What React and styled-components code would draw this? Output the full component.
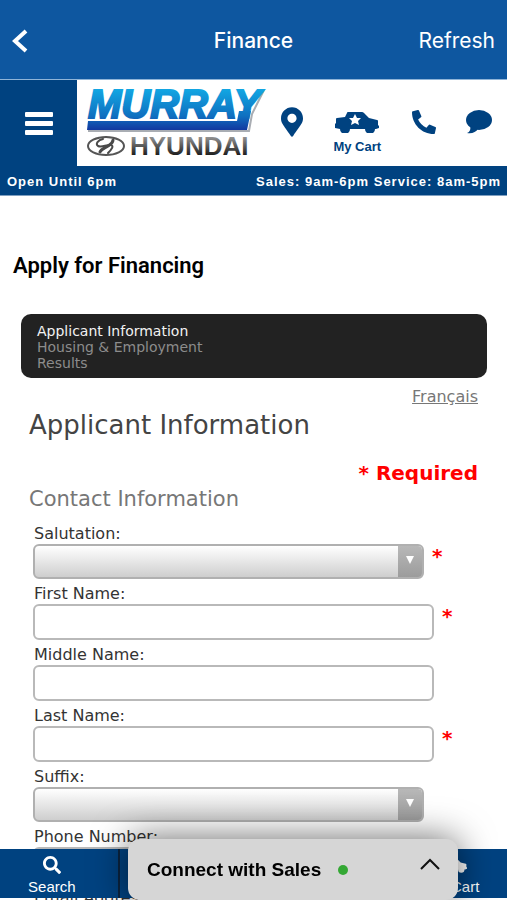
import React from 'react';
import styled, { createGlobalStyle } from 'styled-components';
import { FaMapMarkerAlt, FaPhoneAlt, FaSearch } from 'react-icons/fa';

const GlobalStyle = createGlobalStyle`
  * {
    box-sizing: border-box;
  }

  body {
    margin: 0;
    background: #ffffff;
    font-family: 'DejaVu Sans', Verdana, sans-serif;
  }

  button {
    padding: 0;
    border: 0;
    background: none;
    color: inherit;
    cursor: pointer;
  }
`;

const Screen = styled.div`
  height: 100vh;
  display: flex;
  flex-direction: column;
  overflow: hidden;
`;

const TopBar = styled.header`
  flex: none;
  height: 80px;
  padding: 2px 12px 0;
  display: grid;
  grid-template-columns: 1fr auto 1fr;
  align-items: center;
  background: #0e57a0;
  border-bottom: 1px solid #8fb4d8;
  color: #ffffff;
  font-family: Inter, sans-serif;
  font-size: 21px;

  h1 {
    margin: 0;
    font-size: 21px;
    font-weight: 500;
  }
`;

const BackButton = styled.button`
  justify-self: start;
  display: flex;
`;

const RefreshButton = styled.button`
  justify-self: end;
  font: inherit;
`;

const SiteHeader = styled.div`
  flex: none;
  height: 86px;
  display: flex;
  background: #ffffff;
  color: #004280;
`;

const MenuButton = styled.button`
  width: 77px;
  display: flex;
  align-items: center;
  justify-content: center;
  background: #004280;
`;

const Logo = styled.a`
  flex: none;
  margin-left: 8px;
  display: flex;
`;

const Shortcuts = styled.nav`
  flex: 1;
  padding: 0 15px 0 14px;
  display: flex;
  justify-content: space-between;
`;

const Shortcut = styled.a`
  height: 75px;
  padding-top: 26px;
  display: flex;
  flex-direction: column;
  align-items: center;
  justify-content: space-between;
  color: inherit;
  font: bold 13px/16px 'Liberation Sans', Arial, sans-serif;
  text-decoration: none;

  .icon {
    height: 32px;
    display: flex;
    align-items: center;
  }

  .pin {
    width: 22px;
    height: 30px;
  }
`;

const HoursBar = styled.div`
  flex: none;
  height: 30px;
  padding: 3px 6px 0 7px;
  display: flex;
  align-items: center;
  justify-content: space-between;
  background: #004280;
  border-bottom: 1px solid #7f9fc0;
  color: #ffffff;
  font: bold 13px/16px 'Liberation Sans', Arial, sans-serif;
  letter-spacing: 1px;
`;

const Content = styled.main`
  flex: 1;
  min-height: 0;
  overflow-y: auto;
  scrollbar-width: none;
`;

const PageTitle = styled.h2`
  margin: 56px 13px 34px;
  color: #000000;
  font: 600 22px/28px Roboto, sans-serif;
`;

const Steps = styled.ol`
  margin: 0 20px 0 21px;
  padding: 9px 16px 7px;
  list-style: none;
  background: #222222;
  border-radius: 10px;
  font-size: 14px;
  line-height: 16px;
`;

const Step = styled.li`
  color: ${({ $active }) => ($active ? '#f2f2f2' : '#8c8c8c')};
`;

const Form = styled.form`
  padding: 9px 29px 0;
  display: flex;
  flex-direction: column;
`;

const LanguageLink = styled.a`
  align-self: flex-end;
  color: #777777;
  font-size: 16px;
  line-height: 20px;
`;

const FormTitle = styled.h3`
  margin: 2px 0 20px;
  color: #444444;
  font-size: 26px;
  font-weight: 400;
  line-height: 32px;
`;

const RequiredNote = styled.p`
  margin: 0;
  color: #ff0000;
  font-size: 20px;
  font-weight: 700;
  line-height: 24px;
  text-align: right;
`;

const GroupTitle = styled.h4`
  margin: 0 0 10px;
  color: #777777;
  font-size: 21px;
  font-weight: 400;
  line-height: 28px;
`;

const Field = styled.div`
  margin: 0 0 4px 4px;

  label {
    display: block;
    padding-left: 1px;
    color: #333333;
    font-size: 16px;
    line-height: 21px;
  }
`;

const ControlRow = styled.div`
  display: grid;
  grid-template-columns: 1fr ${({ $select }) => ($select ? '54px' : '44px')};
`;

const Star = styled.span`
  padding-left: 8px;
  color: #ff0000;
  font-size: 20px;
  font-weight: 700;
  line-height: 24px;
`;

const TextInput = styled.input`
  min-width: 0;
  height: 36px;
  padding: 0 8px;
  background: #ffffff;
  border: 2px solid #b9b9b9;
  border-radius: 6px;
  font: inherit;
`;

const SelectBox = styled.div`
  height: 35px;
  display: flex;
  overflow: hidden;
  border: 2px solid #b0b0b0;
  border-radius: 6px;
  background: linear-gradient(#ffffff, #cecece);

  select {
    flex: 1;
    min-width: 0;
    padding: 0 8px;
    appearance: none;
    border: 0;
    background: none;
    font: inherit;
  }
`;

const SelectArrow = styled.span`
  width: 24px;
  padding-bottom: 3px;
  display: flex;
  align-items: center;
  justify-content: center;
  background: linear-gradient(#b8b8b8, #9c9c9c);
  pointer-events: none;
`;

const BottomBar = styled.nav`
  position: fixed;
  right: 0;
  bottom: 2px;
  left: 0;
  height: 49px;
  overflow: hidden;
  background: #004280;
`;

const BottomItems = styled.div`
  height: 100%;
  margin: 0 -14px;
  display: grid;
  grid-template-columns: repeat(4, 1fr);
`;

const BottomItem = styled.a`
  grid-column: ${({ $column }) => $column};
  padding-top: 7px;
  display: flex;
  flex-direction: column;
  align-items: center;
  gap: 4px;
  border-right: 2px solid #0a2440;
  color: #ffffff;
  font: 15px/18px 'Liberation Sans', Arial, sans-serif;
  text-decoration: none;

  svg {
    height: 18px;
  }
`;

const ChatTab = styled.button`
  && {
    position: fixed;
    right: 49px;
    bottom: 0;
    left: 128px;
    height: 61px;
    padding: 0 18px 0 19px;
    display: flex;
    align-items: center;
    background: #d6d6d6;
    border-radius: 12px;
    box-shadow: 0 0 36px rgba(0, 0, 0, 0.6);
    color: #000000;
    font: bold 19px/24px 'Liberation Sans', Arial, sans-serif;
  }

  .caret {
    margin: 0 0 12px auto;
  }
`;

const OnlineDot = styled.span`
  width: 10px;
  height: 10px;
  margin-left: 17px;
  border-radius: 50%;
  background: #34a834;
`;

const CarIcon = ({ width = 44 }) => (
  <svg width={width} height={width / 2} viewBox="0 0 44 22">
    <path
      fill="currentColor"
      d="M13 1h14q1 0 2 1l5 5 8 2q1 0 1 1v4l1 1v2l-3 1h-1a5 5 0 0 1-10 0H15a5 5 0 0 1-10 0L0 17v-4l1-1V8q0-1 1-1l8-1 2-4q0-1 1-1z"
    />
    <path fill="#ffffff" d="M20 3l2 4h4l-3 3 1 4-4-2-4 2 1-4-3-3h4z" />
  </svg>
);

const BubbleIcon = () => (
  <svg width="26" height="24" viewBox="0 0 26 24" fill="currentColor">
    <ellipse cx="13" cy="10" rx="13" ry="10" />
    <path d="M4 15c1 4 0 7-3 8 5 1 9-1 11-4z" />
  </svg>
);

const MurrayLogo = () => (
  <svg width="182" height="84" viewBox="0 0 182 84" role="img" aria-label="Murray Hyundai">
    <defs>
      <linearGradient id="blue" x1="0" y1="10" x2="0" y2="50" gradientUnits="userSpaceOnUse">
        <stop offset="0" stopColor="#12a5e2" />
        <stop offset="0.65" stopColor="#0f70c0" />
        <stop offset="1" stopColor="#1238a0" />
      </linearGradient>
      <linearGradient id="steel" x1="0" y1="56" x2="0" y2="75" gradientUnits="userSpaceOnUse">
        <stop offset="0" stopColor="#9a9a9a" />
        <stop offset="1" stopColor="#1e1e1e" />
      </linearGradient>
    </defs>
    <path fill="none" stroke="#a9adb3" strokeWidth="2" d="M179 10L167 34l-3 17H3" />
    <path fill="url(#blue)" d="M3 41h149l2-10h12l-4 19H2z" />
    <g fontFamily="'Liberation Sans', Arial, sans-serif" fontWeight="700">
      <text
        x="3"
        y="38"
        fontSize="40"
        fontStyle="italic"
        fill="url(#blue)"
        stroke="url(#blue)"
        strokeWidth="2"
      >
        MURRAY
      </text>
      <text x="45" y="75" fontSize="26" fill="url(#steel)">
        HYUNDAI
      </text>
    </g>
    <ellipse cx="21" cy="66" rx="18" ry="9" fill="none" stroke="#555555" strokeWidth="2" />
    <g fill="none" stroke="#4a4a4a" strokeLinecap="round">
      <path strokeWidth="2" d="M18 59c-5 1-8 5-5 7 4 2 9-2 13-1 3 1 1 4-3 8" />
      <path strokeWidth="3" d="M28 60c0 3-2 4-5 6s-7 3-8 6" />
    </g>
  </svg>
);

const FIELDS = [
  { id: 'salutation', label: 'Salutation:', select: true, required: true },
  { id: 'firstName', label: 'First Name:', required: true },
  { id: 'middleName', label: 'Middle Name:' },
  { id: 'lastName', label: 'Last Name:', required: true },
  { id: 'suffix', label: 'Suffix:', select: true },
  { id: 'phone', label: 'Phone Number:' },
  { id: 'email', label: 'Email Address:' },
];

const FormField = ({ id, label, select, required }) => (
  <Field>
    <label htmlFor={id}>{label}</label>
    <ControlRow $select={select}>
      {select ? (
        <SelectBox>
          <select id={id} name={id} defaultValue="">
            <option value="" />
          </select>
          <SelectArrow>
            <svg width="10" height="8" viewBox="0 0 10 8">
              <path fill="#ffffff" d="M1 0h8L5 8z" />
            </svg>
          </SelectArrow>
        </SelectBox>
      ) : (
        <TextInput id={id} name={id} type="text" />
      )}
      {required && <Star>*</Star>}
    </ControlRow>
  </Field>
);

const App = () => {
  return (
    <Screen>
      <GlobalStyle />
      <TopBar>
        <BackButton aria-label="Back">
          <svg width="18" height="26" viewBox="0 0 18 26" fill="none" stroke="#ffffff" strokeWidth="4">
            <path d="M14 3L3 13l11 10" />
          </svg>
        </BackButton>
        <h1>Finance</h1>
        <RefreshButton>Refresh</RefreshButton>
      </TopBar>

      <SiteHeader>
        <MenuButton aria-label="Menu">
          <svg width="28" height="24" viewBox="0 0 28 24" fill="#ffffff">
            <rect x="0" y="1" width="28" height="5" rx="1" />
            <rect x="0" y="10" width="28" height="5" rx="1" />
            <rect x="0" y="19" width="28" height="5" rx="1" />
          </svg>
        </MenuButton>
        <Logo href="#home">
          <MurrayLogo />
        </Logo>
        <Shortcuts>
          <Shortcut href="#map" aria-label="Directions">
            <span className="icon">
              <FaMapMarkerAlt className="pin" />
            </span>
          </Shortcut>
          <Shortcut href="#cart">
            <span className="icon">
              <CarIcon />
            </span>
            My Cart
          </Shortcut>
          <Shortcut href="#call" aria-label="Call">
            <span className="icon">
              <FaPhoneAlt size={24} />
            </span>
          </Shortcut>
          <Shortcut href="#chat" aria-label="Chat">
            <span className="icon">
              <BubbleIcon />
            </span>
          </Shortcut>
        </Shortcuts>
      </SiteHeader>

      <HoursBar>
        <span>Open Until 6pm</span>
        <span>Sales: 9am-6pm Service: 8am-5pm</span>
      </HoursBar>

      <Content>
        <PageTitle>Apply for Financing</PageTitle>
        <Steps>
          <Step $active>Applicant Information</Step>
          <Step>Housing &amp; Employment</Step>
          <Step>Results</Step>
        </Steps>
        <Form>
          <LanguageLink href="#fr">Français</LanguageLink>
          <FormTitle>Applicant Information</FormTitle>
          <RequiredNote>* Required</RequiredNote>
          <GroupTitle>Contact Information</GroupTitle>
          {FIELDS.map((field) => (
            <FormField key={field.id} {...field} />
          ))}
        </Form>
      </Content>

      <BottomBar>
        <BottomItems>
          <BottomItem href="#search" $column={1}>
            <FaSearch size={18} />
            Search
          </BottomItem>
          <BottomItem href="#cart" $column={4}>
            <CarIcon width={28} />
            My Cart
          </BottomItem>
        </BottomItems>
      </BottomBar>

      <ChatTab>
        Connect with Sales
        <OnlineDot />
        <svg className="caret" width="20" height="12" viewBox="0 0 20 12" fill="none" stroke="#111111" strokeWidth="2">
          <path d="M1 11l9-9 9 9" />
        </svg>
      </ChatTab>
    </Screen>
  );
};

export default App;
